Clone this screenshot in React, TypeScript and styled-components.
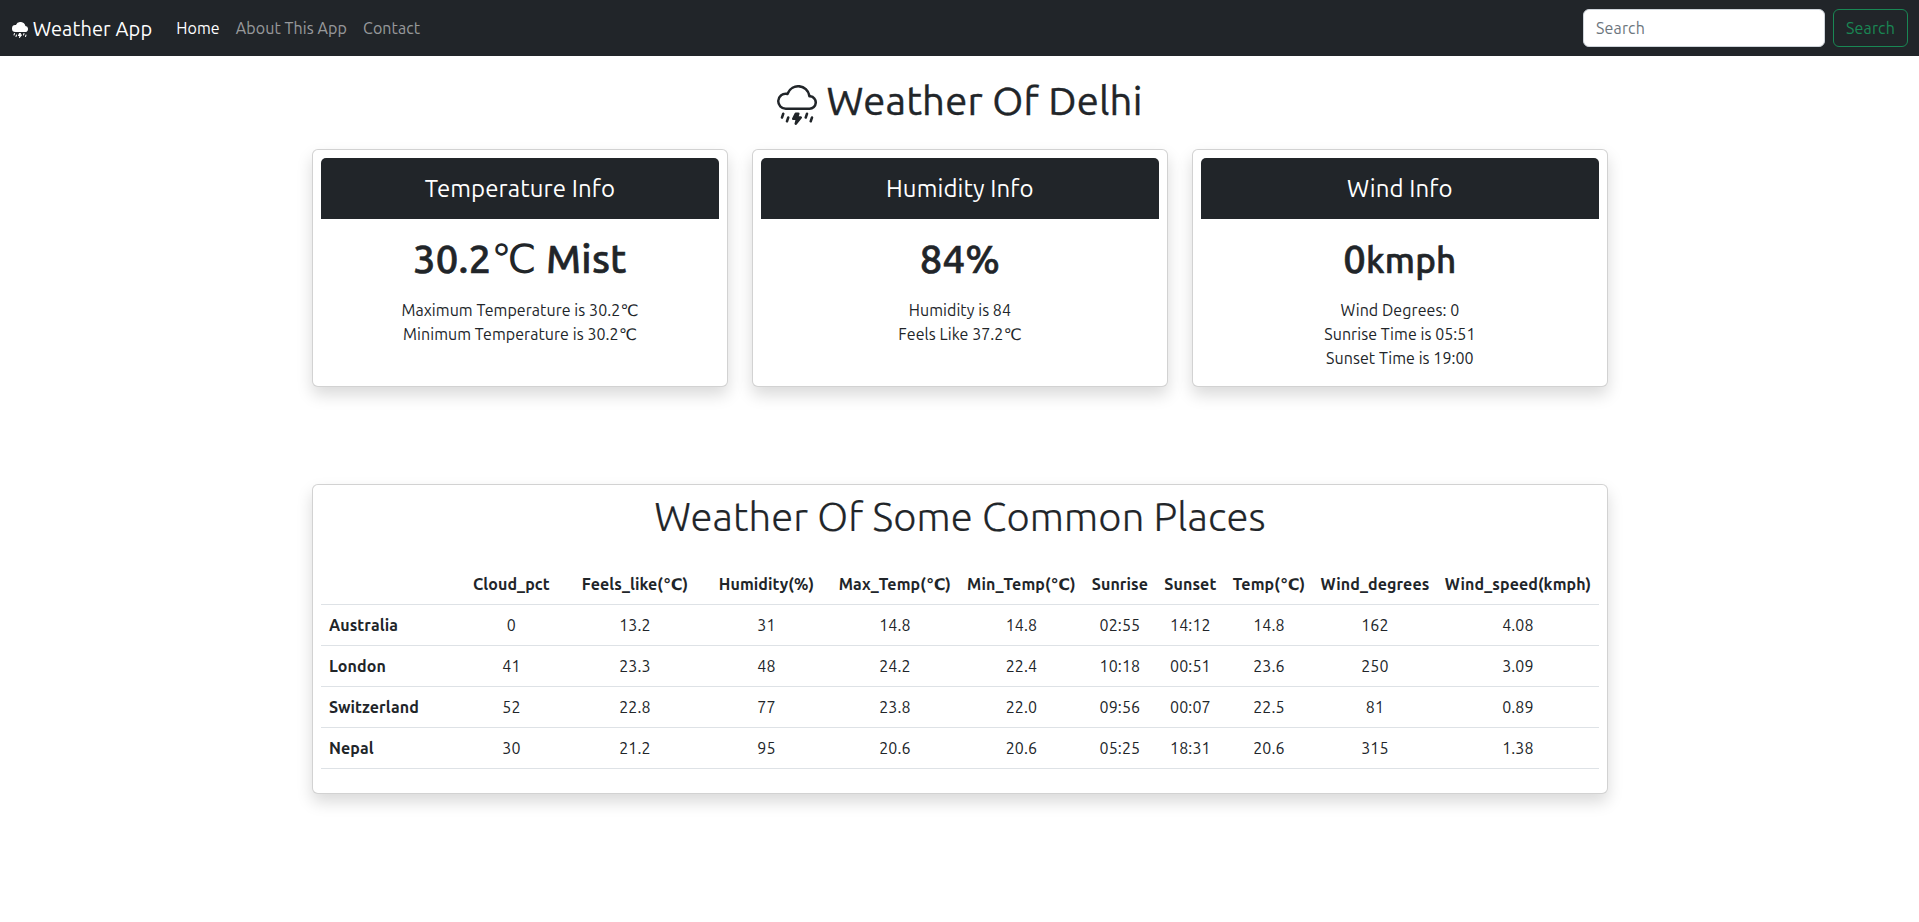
import React from 'react';
import styled, { createGlobalStyle } from 'styled-components';
import { BsCloudLightningRain, BsCloudLightningRainFill } from 'react-icons/bs';

const GlobalStyle = createGlobalStyle`
  *, *::before, *::after { box-sizing: border-box; }
  body {
    margin: 0;
    min-height: 100vh;
    font-family: Ubuntu, "DejaVu Sans", sans-serif;
    font-size: 16px;
    line-height: 1.5;
    letter-spacing: 0.1px;
    color: #212529;
    background: #fff;
  }
  h1, h4, ul, p { margin: 0; padding: 0; }
`;

const Navbar = styled.nav`
  display: flex;
  align-items: center;
  height: 56px;
  padding: 0 11px 0 12px;
  background: #212529;
`;

const Brand = styled.a`
  margin-right: 16px;
  padding-top: 1px;
  font-size: 20px;
  line-height: 30px;
  color: #fff;
  text-decoration: none;
  white-space: nowrap;

  svg {
    width: 16px;
    height: 16px;
    vertical-align: -2.5px;
  }
`;

const NavList = styled.ul`
  display: flex;
  flex: 1;
  list-style: none;
`;

const NavLink = styled.a<{ $active?: boolean }>`
  display: block;
  padding: 8px;
  color: ${({ $active }) => ($active ? '#fff' : 'rgba(255, 255, 255, 0.55)')};
  text-decoration: none;
`;

const SearchForm = styled.form`
  display: flex;
  gap: 8px;
`;

const SearchInput = styled.input`
  width: 242px;
  height: 38px;
  padding: 6px 12px;
  border: 1px solid #ced4da;
  border-radius: 6px;
  font: inherit;
  letter-spacing: 0.15px;
  color: #212529;
  background: #fff;

  &::placeholder {
    color: #6c757d;
    opacity: 1;
  }
`;

const SearchButton = styled.button`
  height: 38px;
  padding: 6px 12px;
  border: 1px solid #198754;
  border-radius: 6px;
  font: inherit;
  letter-spacing: 0.15px;
  color: #198754;
  background: transparent;
`;

const Container = styled.main`
  width: 1320px;
  margin: 0 auto;
  padding: 0 11.6px 48px 12.4px;
`;

const PageTitle = styled.h1`
  margin: 21px 0 24px;
  font-size: 40px;
  font-weight: 400;
  line-height: 48px;
  letter-spacing: 0.2px;
  text-align: center;
  -webkit-text-stroke: 0.4px currentColor;

  svg {
    width: 40px;
    height: 40px;
    vertical-align: -10px;
  }
`;

const CardGrid = styled.div`
  display: grid;
  grid-template-columns: repeat(3, 1fr);
  gap: 24px;
  margin-bottom: 96.3px;
  text-align: center;
`;

const Card = styled.section`
  padding: 8px;
  border: 1px solid rgba(0, 0, 0, 0.175);
  border-radius: 6px;
  background: #fff;
  box-shadow: 0 8px 16px rgba(0, 0, 0, 0.15);
`;

const CardHeader = styled.header`
  padding: 16px;
  border-radius: 5px 5px 0 0;
  color: #fff;
  background: #212529;
`;

const CardHeading = styled.h4`
  font-size: 24px;
  font-weight: 400;
  line-height: 29px;
`;

const CardBody = styled.div`
  padding: 16px 16px 8px;
`;

const Reading = styled.h1`
  margin-bottom: 15.4px;
  font-size: 40px;
  font-weight: 500;
  line-height: 48px;
  letter-spacing: 0.2px;
  -webkit-text-stroke: 0.6px currentColor;
`;

const Degree = styled.span`
  font-weight: 400;
  -webkit-text-stroke: 0;
`;

const Unit = styled.small`
  font-size: 35px;
  line-height: 1;
`;

const Details = styled.ul`
  min-height: 72px;
  letter-spacing: 0.06px;
  list-style: none;
`;

const PlacesCard = styled(Card)`
  height: 310.2px;
`;

const PlacesTitle = styled.h1`
  margin-bottom: 23.5px;
  font-size: 40px;
  font-weight: 300;
  line-height: 48px;
  text-align: center;
  -webkit-text-stroke: 0.2px currentColor;
`;

const PlacesTable = styled.table`
  width: 100%;
  table-layout: fixed;
  border-collapse: collapse;
  text-align: center;
  white-space: nowrap;

  th, td {
    padding: 8px 4px;
    border-bottom: 1px solid #dee2e6;
    line-height: 24px;
  }
`;

const PlaceName = styled.th`
  text-align: left;

  && { padding-left: 8px; }
`;

const cards = [
  {
    title: 'Temperature Info',
    reading: <>30.2<Degree>&#8451;</Degree> Mist</>,
    details: ['Maximum Temperature is 30.2\u2103', 'Minimum Temperature is 30.2\u2103'],
  },
  {
    title: 'Humidity Info',
    reading: <>84%</>,
    details: ['Humidity is 84', 'Feels Like 37.2\u2103'],
  },
  {
    title: 'Wind Info',
    reading: <>0<Unit>kmph</Unit></>,
    details: ['Wind Degrees: 0', 'Sunrise Time is 05:51', 'Sunset Time is 19:00'],
  },
];

const columns = [
  'Cloud_pct', 'Feels_like(\u2103)', 'Humidity(%)', 'Max_Temp(\u2103)', 'Min_Temp(\u2103)',
  'Sunrise', 'Sunset', 'Temp(\u2103)', 'Wind_degrees', 'Wind_speed(kmph)',
];

/* Track widths in px: place name first, then one per measurement. */
const widths = [134, 113, 134, 129, 128, 125, 72, 69, 88, 124, 162];

const places = [
  { name: 'Australia', values: ['0', '13.2', '31', '14.8', '14.8', '02:55', '14:12', '14.8', '162', '4.08'] },
  { name: 'London', values: ['41', '23.3', '48', '24.2', '22.4', '10:18', '00:51', '23.6', '250', '3.09'] },
  { name: 'Switzerland', values: ['52', '22.8', '77', '23.8', '22.0', '09:56', '00:07', '22.5', '81', '0.89'] },
  { name: 'Nepal', values: ['30', '21.2', '95', '20.6', '20.6', '05:25', '18:31', '20.6', '315', '1.38'] },
];

export default function App() {
  return (
    <>
      <GlobalStyle />
      <Navbar>
        <Brand href="#"><BsCloudLightningRainFill /> Weather App</Brand>
        <NavList>
          <li><NavLink href="#" $active>Home</NavLink></li>
          <li><NavLink href="#">About This App</NavLink></li>
          <li><NavLink href="#">Contact</NavLink></li>
        </NavList>
        <SearchForm>
          <SearchInput type="search" placeholder="Search" aria-label="Search" />
          <SearchButton type="button">Search</SearchButton>
        </SearchForm>
      </Navbar>
      <Container>
        <PageTitle><BsCloudLightningRain /> Weather Of Delhi</PageTitle>
        <CardGrid>
          {cards.map((card) => (
            <Card key={card.title}>
              <CardHeader><CardHeading>{card.title}</CardHeading></CardHeader>
              <CardBody>
                <Reading>{card.reading}</Reading>
                <Details>
                  {card.details.map((line) => <li key={line}>{line}</li>)}
                </Details>
              </CardBody>
            </Card>
          ))}
        </CardGrid>
        <PlacesCard>
          <PlacesTitle>Weather Of Some Common Places</PlacesTitle>
          <PlacesTable>
            <colgroup>
              {widths.map((width, i) => <col key={i} width={width} />)}
            </colgroup>
            <thead>
              <tr>
                <th />
                {columns.map((name) => <th key={name}>{name}</th>)}
              </tr>
            </thead>
            <tbody>
              {places.map((place) => (
                <tr key={place.name}>
                  <PlaceName scope="row">{place.name}</PlaceName>
                  {place.values.map((value, i) => <td key={i}>{value}</td>)}
                </tr>
              ))}
            </tbody>
          </PlacesTable>
        </PlacesCard>
      </Container>
    </>
  );
}
